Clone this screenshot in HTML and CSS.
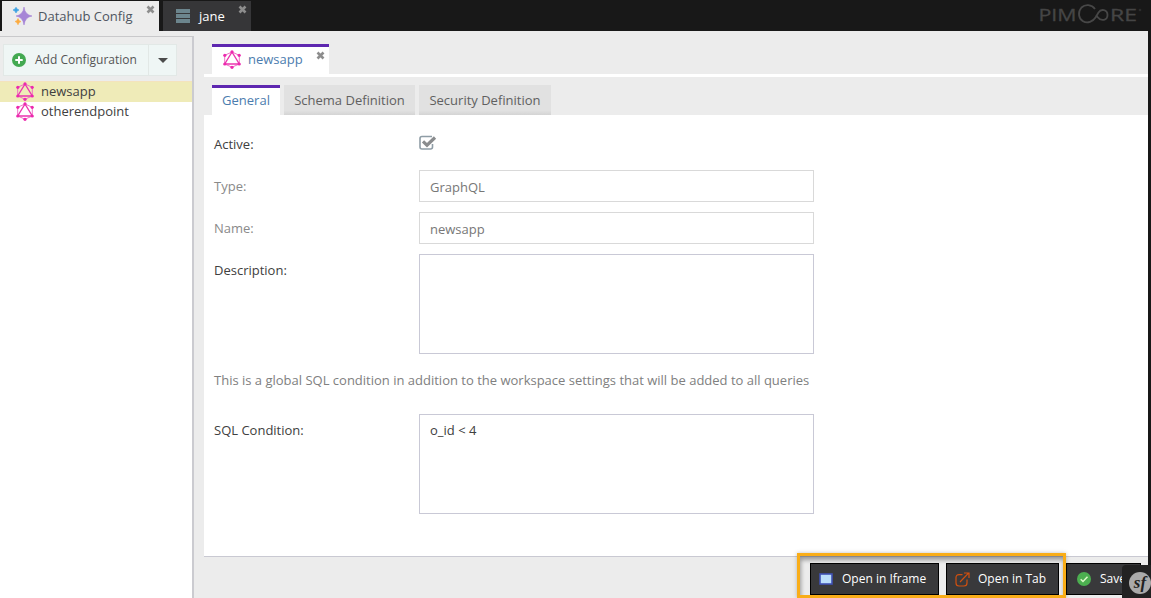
FILE: index.html
```html
<!DOCTYPE html>
<html lang="en">
<head>
<meta charset="utf-8">
<title>Datahub Config</title>
<link rel="stylesheet" href="styles.css">
</head>
<body>
<svg class="defs" width="0" height="0">
  <symbol id="graphql" viewBox="0 0 18 19">
    <path d="M9 2 16.300 5.300V14L9 17.200 1.700 14V5.300Z" fill="none" stroke="#ee62c2" stroke-width=".9"/>
    <path d="M9 2 1.700 14H16.300Z" fill="none" stroke="#ec35b0" stroke-width="1.400"/>
    <g fill="#ec2aae"><circle cx="9" cy="1.800" r="1.600"/><circle cx="16.200" cy="5.300" r="1.600"/><circle cx="16.200" cy="14" r="1.600"/><circle cx="9" cy="17.300" r="1.600"/><circle cx="1.800" cy="14" r="1.600"/><circle cx="1.800" cy="5.300" r="1.600"/></g>
  </symbol>
  <symbol id="close" viewBox="0 0 9 9"><path d="M1.500 1.500 7.500 7.500M7.500 1.500 1.500 7.500" stroke="#8d8d8d" stroke-width="2.600"/></symbol>
</svg>
<div class="app">
  <header class="topbar">
    <div class="apptab apptab-active">
      <svg width="20" height="20" viewBox="0 0 20 20"><path d="M12 1Q13 9 20 10 13 11 12 19 11 11 4 10 11 9 12 1Z" fill="#a685d6" stroke="#a685d6" stroke-width=".6"/><path d="M4 1.200Q4.600 3.400 7 4 4.600 4.600 4 7 3.400 4.600 1 4 3.400 3.400 4 1.200Z" fill="#3ba1e3" stroke="#3ba1e3" stroke-width=".6"/><path d="M6 12.500Q6.700 15 9 15.500 6.700 16 6 18.800 5.300 16 3 15.500 5.300 15 6 12.500Z" fill="#fcab40" stroke="#fcab40" stroke-width=".6"/></svg>
      <span>Datahub Config</span>
      <svg class="close" width="9" height="9"><use href="#close"/></svg>
    </div>
    <div class="apptab apptab-dark">
      <svg width="14" height="14" viewBox="0 0 14 14"><path d="M0 2H14M0 7H14M0 12H14" stroke="#6c858d" stroke-width="3.800"/></svg>
      <span>jane</span>
      <svg class="close" width="9" height="9"><use href="#close"/></svg>
    </div>
    <svg class="logo" width="106" height="24" viewBox="0 0 106 24">
      <text x="1.500" y="18.800" textLength="38" lengthAdjust="spacingAndGlyphs">PIM</text>
      <path d="M58 7C54.500 2 48 2 44.500 5.500 40.500 10 41.500 16.500 46 19.300 50.500 22 56 19.500 58.500 15.500L61.500 10.500C64 6.500 70.500 7.500 70.500 13S64 19.500 61 15.500L59 13" fill="none" stroke="#474747" stroke-width="1.800"/>
      <text x="73" y="18.800" textLength="27" lengthAdjust="spacingAndGlyphs">RE</text>
      <circle cx="103" cy="8" r="1.300" fill="#2c2c2c"/>
    </svg>
  </header>
  <div class="workspace">
    <aside class="sidebar">
      <div class="toolbar">
        <div class="add">
          <svg width="14" height="14" viewBox="0 0 14 14"><circle cx="7" cy="7" r="7" fill="#43a951"/><path d="M7 3.300V10.700M3.300 7H10.700" stroke="#fff" stroke-width="2"/></svg>
          <span>Add Configuration</span>
        </div>
        <div class="arrow"><svg width="10" height="5" viewBox="0 0 10 5"><path d="M0 0H10L5 5Z" fill="#4b4b4b"/></svg></div>
      </div>
      <ul class="tree">
        <li class="selected"><svg width="18" height="19"><use href="#graphql"/></svg><span>newsapp</span></li>
        <li><svg width="18" height="19"><use href="#graphql"/></svg><span>otherendpoint</span></li>
      </ul>
    </aside>
    <main class="main">
      <div class="doctabs">
        <div class="doctab"><svg width="18" height="19"><use href="#graphql"/></svg><span>newsapp</span><svg class="close" width="9" height="9"><use href="#close"/></svg></div>
      </div>
      <nav class="tabs">
        <div class="tab current"><span>General</span></div>
        <div class="tab schema"><span>Schema Definition</span></div>
        <div class="tab security"><span>Security Definition</span></div>
      </nav>
      <section class="form">
        <div class="row"><label>Active:</label>
          <svg class="check" width="18" height="16" viewBox="0 0 18 16"><path d="M13 1.500H3Q1 1.500 1 3.500V12Q1 14 3 14H11.500Q13.500 14 13.500 12V9" fill="none" stroke="#8f9da6" stroke-width="1.600"/><path d="M4 6.300 8 10.200 16 2.500" fill="none" stroke="#8a8c8e" stroke-width="3.200"/></svg>
        </div>
        <div class="row muted"><label>Type:</label><div class="field">GraphQL</div></div>
        <div class="row muted"><label>Name:</label><div class="field">newsapp</div></div>
        <div class="row tall"><label>Description:</label><div class="area"></div></div>
        <p class="hint">This is a global SQL condition in addition to the workspace settings that will be added to all queries</p>
        <div class="row tall"><label>SQL Condition:</label><div class="area">o_id &lt; 4</div></div>
      </section>
      <footer class="footer">
        <div class="btn iframe"><svg width="14" height="12" viewBox="0 0 14 12"><rect x="1" y="1" width="12" height="10" fill="#bbdefb" stroke="#3f51b5" stroke-width="1.600"/></svg><span>Open in Iframe</span></div>
        <div class="btn intab"><svg width="15" height="15" viewBox="0 0 15 15"><path d="M7.500 2.600H4Q1 2.600 1 5.600V11Q1 14 4 14H9Q12 14 12 11V7.500M5 10 13.500 1.200M9 1H14V6" fill="none" stroke="#d1500f" stroke-width="1.200"/></svg><span>Open in Tab</span></div>
        <div class="btn save"><svg width="14" height="14" viewBox="0 0 14 14"><circle cx="7" cy="7" r="7" fill="#4caf50"/><path d="M3.700 7.200 6 9.500 10.500 4.800" fill="none" stroke="#ddf9c9" stroke-width="1.500"/></svg><span>Save</span></div>
      </footer>
    </main>
  </div>
  <div class="highlight"></div>
  <div class="symfony"><svg width="29" height="33" viewBox="0 0 29 33"><circle cx="18" cy="18" r="11" fill="#aaa"/><text x="18" y="23" text-anchor="middle">sf</text></svg></div>
</div>
</body>
</html>
```
FILE: styles.css
```css
* { box-sizing: border-box; }
body { margin: 0; overflow: hidden; font: 13px/20px "Open Sans", "Noto Sans", sans-serif; color: #404040; }
.defs { position: absolute; }
svg { display: block; flex: none; }
span { white-space: nowrap; }
.app { position: relative; width: 1151px; height: 598px; display: flex; flex-direction: column; background: #181818; }
.topbar { display: flex; height: 31px; padding: 1px 8px 0 2px; gap: 4px; }
.apptab { position: relative; display: flex; align-items: center; height: 30px; }
.apptab .close { position: absolute; top: 4px; right: 4px; }
.apptab-active { width: 157px; padding-left: 10px; gap: 6px; background: #ececec; color: #4e5560; }
.apptab-dark { width: 88px; padding-left: 13px; gap: 9px; background: #363638; color: #fff; }
.logo { margin: 1px 0 0 auto; }
.logo text { font: 17px "Open Sans", sans-serif; fill: #454545; stroke: #454545; stroke-width: .3px; }
.workspace { display: flex; flex: 1; width: 1148px; background: #ececec; }
.sidebar { width: 194px; margin-top: 5px; border-top: 1px solid #c9c9cb; border-right: 2px solid #cbcbd0; background: #fff; }
.toolbar { display: flex; height: 44px; padding: 7px 3px 5px; background: #ececec; }
.add, .arrow { display: flex; align-items: center; border: 1px solid #e2e8e6; background: #eff6f5; }
.add { width: 146px; padding-left: 8px; gap: 9px; color: #555; font-size: 12px; }
.arrow { width: 28px; border-left: 0; justify-content: center; }
.tree { list-style: none; margin: 0; padding: 0; }
.tree li { display: flex; align-items: center; height: 20px; padding: 0 0 2px 16px; gap: 7px; }
.tree .selected { height: 21px; background: #efebb8; border-top: 1px solid #f4e3bd; }
.main { display: flex; flex-direction: column; width: 944px; margin-left: 10px; padding-top: 13px; }
.doctabs { height: 33px; padding-left: 8px; border-bottom: 3px solid #fff; }
.doctab { position: relative; display: flex; align-items: center; width: 117px; height: 30px; padding: 0 0 3px 11px; gap: 7px; border-top: 3px solid #5e27b0; background: #fff; color: #4b7cae; }
.doctab .close { position: absolute; top: 4px; right: 4px; }
.tabs { display: flex; gap: 4px; height: 38px; padding: 8px 0 0 8px; }
.tab { display: flex; align-items: center; justify-content: center; background: linear-gradient(#e1e1e1 85%, #d4d4d4); color: #606060; }
.current { width: 68px; border-top: 3px solid #5e27b0; background: #fff; color: #4b7cae; padding-bottom: 4px; }
.schema { width: 131px; }
.security { width: 132px; }
.form { height: 441px; padding: 13px 10px 0; background: #fff; }
.row { display: flex; height: 32px; margin-bottom: 10px; }
.row label { width: 205px; padding-top: 6px; }
.check { margin-top: 7px; }
.muted { color: #8a8a8a; }
.field, .area { width: 395px; padding: 6px 10px; border: 1px solid #d9d9d9; }
.muted .field { color: #777; }
.tall { height: 100px; }
.area { padding-top: 5px; border-color: #c9c9d6; }
.hint { height: 20px; margin: 16px 0 24px; color: #808080; }
.footer { display: flex; height: 42px; padding: 6px 0 0 606px; border-top: 1px solid #c9c9d2; }
.btn { display: flex; align-items: center; height: 32px; border: 1px solid #000; background: #39393b; color: #fff; font-size: 12px; }
.iframe { width: 129px; margin-right: 7px; padding-left: 8px; gap: 9px; }
.intab { width: 113px; margin-right: 7px; padding-left: 8px; gap: 8px; }
.save { width: 75px; padding-left: 10px; gap: 9px; }
.highlight { position: absolute; left: 797px; top: 553px; width: 269px; height: 45px; border: 3px solid #f9ad18; box-shadow: inset 1px 4px 4px rgba(0,0,0,.35), 0 0 4px rgba(0,0,0,.25); }
.symfony { position: absolute; left: 1122px; top: 565px; width: 29px; height: 33px; border-radius: 4px 0 0 0; background: #222; }
.symfony text { font: italic bold 17px "Liberation Serif", serif; fill: #222; }
```
